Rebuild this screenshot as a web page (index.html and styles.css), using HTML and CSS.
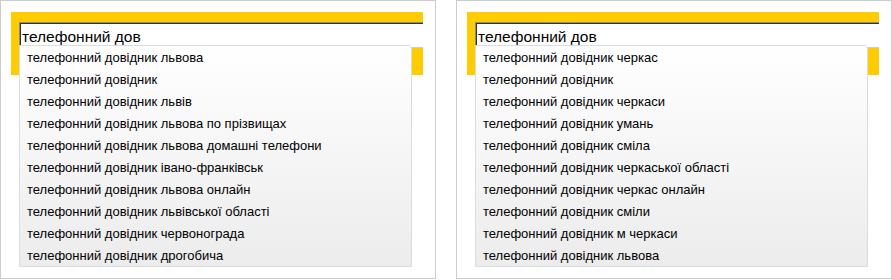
FILE: index.html
```html
<!DOCTYPE html>
<html>
<head>
<meta charset="utf-8">
<title>Підказки пошуку</title>
<link rel="stylesheet" href="styles.css">
</head>
<body>
<div class="panel">
  <div class="search">
    <div class="field">телефонний дов</div>
    <ul class="suggest">
      <li>телефонний довідник львова</li>
      <li>телефонний довідник</li>
      <li>телефонний довідник львів</li>
      <li>телефонний довідник львова по прізвищах</li>
      <li>телефонний довідник львова домашні телефони</li>
      <li>телефонний довідник івано-франківськ</li>
      <li>телефонний довідник львова онлайн</li>
      <li>телефонний довідник львівської області</li>
      <li>телефонний довідник червонограда</li>
      <li>телефонний довідник дрогобича</li>
    </ul>
  </div>
</div>
<div class="panel">
  <div class="search">
    <div class="field">телефонний дов</div>
    <ul class="suggest">
      <li>телефонний довідник черкас</li>
      <li>телефонний довідник</li>
      <li>телефонний довідник черкаси</li>
      <li>телефонний довідник умань</li>
      <li>телефонний довідник сміла</li>
      <li>телефонний довідник черкаської області</li>
      <li>телефонний довідник черкас онлайн</li>
      <li>телефонний довідник сміли</li>
      <li>телефонний довідник м черкаси</li>
      <li>телефонний довідник львова</li>
    </ul>
  </div>
</div>
</body>
</html>
```

FILE: styles.css
```css
* {box-sizing: border-box}

body {
  margin: 0;
  display: flex;
  gap: 20px;
  font-family: "Liberation Sans", Arial, sans-serif;
  color: #000;
  background: #fff;
}

.panel {
  width: 436px;
  height: 279px;
  border: 1px solid #cccccc;
  padding: 11px 0 0 10px;
}

.search {
  position: relative;
  width: 412px;
  height: 63px;
  background: #ffcc00;
  padding: 10px 0 0 8px;
}

.field {
  height: 26px;
  background: #fff;
  border-top: 1px solid #8a8a8a;
  border-left: 1px solid #8a8a8a;
  border-bottom: 1px solid #cccccc;
  box-shadow: inset 1px 1px 0 #333;
  font-size: 15.5px;
  line-height: 28px;
  padding-left: 2px;
}

.suggest {
  position: absolute;
  top: 33px;
  left: 8px;
  width: 393px;
  margin: 0;
  padding: 0;
  list-style: none;
  border: 1px solid #dcdcdc;
  border-radius: 0 3px 0 0;
  background: linear-gradient(#ffffff, #ececec);
}

.suggest li {
  height: 22px;
  line-height: 23px;
  font-size: 13px;
  padding-left: 7px;
  white-space: nowrap;
}
```
